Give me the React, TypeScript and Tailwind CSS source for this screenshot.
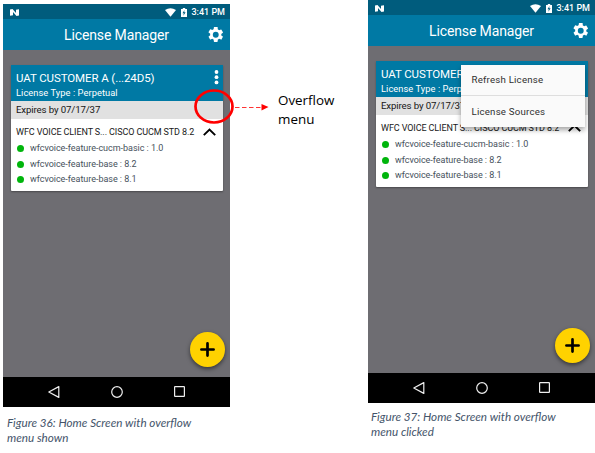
import React from "react";

const features = [
  "wfcvoice-feature-cucm-basic : 1.0",
  "wfcvoice-feature-base : 8.2",
  "wfcvoice-feature-base : 8.1",
];

function StatusBar() {
  return (
    <div className="flex h-[15px] items-center bg-[#005c7d] pt-px pl-[7px] pr-[5px] text-white">
      <svg width="9" height="7" viewBox="0 0 9 7" fill="currentColor">
        <path d="M0 .4 2.5 0 6 4V.7L9 .2V6.6L6.5 7 3 3V6.2L0 6.7Z" />
      </svg>
      <div className="ml-auto flex items-center">
        <svg width="11" height="9" viewBox="0 0 11 9" fill="currentColor">
          <path d="M0 2Q5.5-1.6 11 2L5.5 8.8Z" />
        </svg>
        <svg className="ml-[5px]" width="6" height="9" viewBox="0 0 6 9" fill="currentColor">
          <path d="M1.8 0H4.2V.9H6V9H0V.9H1.8Z" />
          <path d="M3.5 2 1.5 5.2H2.8L2.4 7.8 4.6 4.3H3.2Z" fill="#005c7d" />
        </svg>
        <span className="ml-[4.5px] text-[9px] leading-[14px] font-medium whitespace-nowrap">3:41 PM</span>
      </div>
    </div>
  );
}

function TitleBar() {
  return (
    <div className="flex h-[30.5px] items-center bg-[#0079a4] pt-px pr-[7px] pl-[61px] text-white">
      <h1 className="pt-px text-[14px] leading-[28px] tracking-[-0.12px] whitespace-nowrap">License Manager</h1>
      <svg className="ml-auto" width="15.5" height="15.5" viewBox="2.2 2 19.6 20" fill="currentColor">
        <path d="M19.14 12.94c.04-.3.06-.61.06-.94s-.02-.64-.07-.94l2.03-1.58a.49.49 0 0 0 .12-.61l-1.92-3.32a.49.49 0 0 0-.59-.22l-2.39.96a7 7 0 0 0-1.62-.94l-.36-2.54A.48.48 0 0 0 13.92 2h-3.84a.48.48 0 0 0-.47.41l-.36 2.54a7 7 0 0 0-1.62.94l-2.39-.96a.48.48 0 0 0-.59.22L2.74 8.47a.48.48 0 0 0 .12.61l2.03 1.58c-.05.3-.09.63-.09.94s.02.64.07.94l-2.03 1.58a.49.49 0 0 0-.12.61l1.92 3.32c.12.22.37.29.59.22l2.39-.96c.5.38 1.03.7 1.62.94l.36 2.54c.05.24.24.41.48.41h3.84c.24 0 .44-.17.47-.41l.36-2.54a7 7 0 0 0 1.62-.94l2.39.96c.22.08.47 0 .59-.22l1.92-3.32a.48.48 0 0 0-.12-.61ZM12 15.8a3.8 3.8 0 1 1 0-7.6 3.8 3.8 0 0 1 0 7.6Z" />
      </svg>
    </div>
  );
}

function LicenseCard() {
  return (
    <section className="h-[126px] w-[212px] rounded-[1px] bg-white shadow-[0_1px_2px_rgba(0,0,0,0.35)]">
      <div className="flex h-[36.5px] justify-between bg-[#0079a4] pt-[5px] pr-[4px] pl-[5.5px] text-white">
        <div className="pt-px">
          <h2 className="text-[11.5px] leading-[15px] tracking-[-0.1px] whitespace-nowrap">UAT CUSTOMER A (...24D5)</h2>
          <p className="text-[9.3px] leading-[14px] tracking-[0.06px] whitespace-nowrap">License Type : Perpetual</p>
        </div>
        <svg width="5" height="15" viewBox="0 0 5 15" fill="currentColor">
          <circle cx="2.5" cy="2" r="1.9" />
          <circle cx="2.5" cy="7.2" r="1.9" />
          <circle cx="2.5" cy="12.4" r="1.9" />
        </svg>
      </div>
      <p className="h-[17.5px] bg-[#e1e1e1] pl-[5.5px] text-[9.7px] leading-[18.5px] tracking-[-0.14px] whitespace-nowrap text-[#161616]">
        Expires by 07/17/37
      </p>
      <div className="flex h-[22px] items-start justify-between pr-[6.5px] pl-[5.5px] text-[#202020]">
        <span className="text-[9px] leading-[26px] tracking-[-0.1px] whitespace-nowrap">WFC VOICE CLIENT S... CISCO CUCM STD 8.2</span>
        <svg className="mt-[9.5px]" width="13" height="8" viewBox="0 0 13 8" fill="none" stroke="#000" strokeWidth="1.9">
          <path d="M.8 7.2 6.5 1.5 12.2 7.2" />
        </svg>
      </div>
      <ul className="pl-[6px]">
        {features.map((feature) => (
          <li key={feature} className="flex h-[15.7px] items-center gap-[6.5px] text-[9px] leading-[15px] tracking-[-0.03px] whitespace-nowrap text-[#46515b]">
            <i className="size-[7px] rounded-full bg-[#00b50c]" />
            {feature}
          </li>
        ))}
      </ul>
    </section>
  );
}

function OverflowMenu() {
  return (
    <div className="absolute top-[65px] left-[93px] w-[124px] bg-[#fafafa] text-[9.7px] text-[#303030] shadow-[0_3px_5px_rgba(0,0,0,0.35)]">
      <div className="h-[31px] border-b border-[#dedede] pl-[10.5px] leading-[30px] tracking-[0.2px] whitespace-nowrap">Refresh License</div>
      <div className="h-[31px] pl-[10.5px] leading-[31px] tracking-[0.2px] whitespace-nowrap">License Sources</div>
    </div>
  );
}

function NavBar() {
  return (
    <div className="flex h-[30.5px] items-center justify-between bg-black pr-[45px] pl-[45px]">
      <svg width="12" height="12" viewBox="0 0 12 12" fill="none" stroke="#eee" strokeWidth="1.2" strokeLinejoin="round">
        <path d="M10.8 .6V11.4L.8 6Z" />
      </svg>
      <svg width="12" height="12" viewBox="0 0 12 12" fill="none" stroke="#eee" strokeWidth="1.2">
        <circle cx="6" cy="6" r="5.3" />
      </svg>
      <svg width="11" height="11" viewBox="0 0 11 11" fill="none" stroke="#eee" strokeWidth="1.2">
        <rect x=".6" y=".6" width="9.8" height="9.8" rx=".5" />
      </svg>
    </div>
  );
}

function Phone({ menuOpen = false }: { menuOpen?: boolean }) {
  return (
    <div className="relative flex h-[403px] w-[227px] flex-col bg-[#6e6d72] font-[Roboto,sans-serif]">
      <StatusBar />
      <TitleBar />
      <main className="flex flex-1 flex-col pt-[15px] pl-[7.5px]">
        <LicenseCard />
        <button className="mt-auto mr-[5px] mb-[10px] flex size-[35px] items-center justify-center self-end rounded-full bg-[#ffd200] shadow-[0_2px_4px_rgba(0,0,0,0.5)]">
          <svg width="15" height="15" viewBox="0 0 15 15" stroke="#000" strokeWidth="2.7" strokeLinecap="round">
            <path d="M7.5 1.4V13.6M1.4 7.5H13.6" />
          </svg>
        </button>
      </main>
      <NavBar />
      {menuOpen && <OverflowMenu />}
    </div>
  );
}

export default function App() {
  return (
    <div className="relative flex h-[453px] w-[595px] overflow-hidden bg-white pl-[3px]">
      <figure className="w-[227px] pt-[4px]">
        <Phone />
        <figcaption className="pt-[8px] pl-[4px] font-[Lato,sans-serif] text-[11.7px] leading-[15px] whitespace-nowrap text-[#44546a] italic">
          Figure 36: Home Screen with overflow
          <br />
          menu shown
        </figcaption>
      </figure>
      <svg className="absolute top-[86px] left-[192px]" width="80" height="42" viewBox="192 86 80 42">
        <ellipse cx="214" cy="106.5" rx="18.5" ry="16" fill="none" stroke="#ff0000" strokeWidth="2.7" />
        <path d="M235 107.5H262" stroke="#ff3333" strokeWidth="1" strokeDasharray="4.5 2.5" />
        <path d="M261.5 104 268.5 107 261.5 110.5Z" fill="#ff0000" />
      </svg>
      <p className="mt-[91px] w-[138px] pl-[48px] font-['Open_Sans',sans-serif] text-[13.4px] leading-[19px] whitespace-nowrap text-black">
        Overflow
        <br />
        menu
      </p>
      <figure className="w-[227px]">
        <Phone menuOpen />
        <figcaption className="pt-[6px] pl-[3px] font-[Lato,sans-serif] text-[11.7px] leading-[15px] whitespace-nowrap text-[#44546a] italic">
          Figure 37: Home Screen with overflow
          <br />
          menu clicked
        </figcaption>
      </figure>
    </div>
  );
}
